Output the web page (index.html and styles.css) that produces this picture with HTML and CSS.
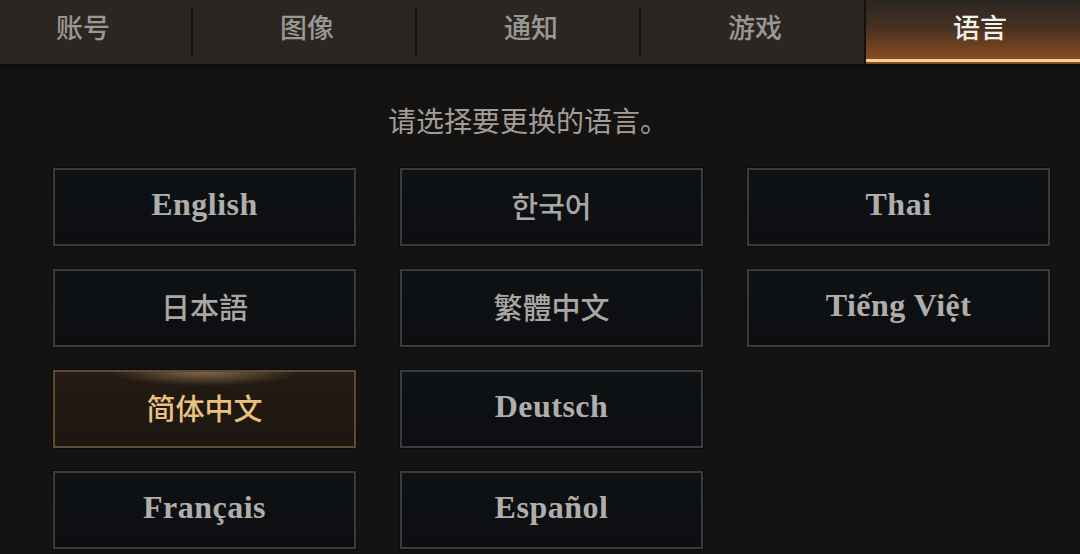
FILE: index.html
```html
<!DOCTYPE html>
<html lang="zh-CN">
<head>
<meta charset="utf-8">
<title>语言</title>
<link rel="stylesheet" href="styles.css">
</head>
<body>
<div class="page">
  <nav class="tabs">
    <div class="tab">账号</div>
    <div class="tab">图像</div>
    <div class="tab">通知</div>
    <div class="tab">游戏</div>
    <div class="tab active">语言</div>
  </nav>
  <main class="content">
    <p class="prompt">请选择要更换的语言。</p>
    <div class="grid">
      <div class="lang latin">English</div>
      <div class="lang">한국어</div>
      <div class="lang latin">Thai</div>
      <div class="lang">日本語</div>
      <div class="lang">繁體中文</div>
      <div class="lang latin">Tiếng Việt</div>
      <div class="lang selected">简体中文</div>
      <div class="lang latin">Deutsch</div>
      <div class="lang empty"></div>
      <div class="lang latin">Français</div>
      <div class="lang latin">Español</div>
    </div>
  </main>
</div>
</body>
</html>
```

FILE: styles.css
```css
* { box-sizing: border-box; }
html, body {
  margin: 0;
  padding: 0;
  background: #151312;
}
.page {
  width: 1080px;
  height: 554px;
  overflow: hidden;
  background: #151312;
  font-family: "Noto Sans CJK SC", "Noto Sans", sans-serif;
}
.tabs {
  display: flex;
  height: 64px;
  margin-left: -29px;
  background: #2a2723;
  box-shadow: 0 2px 3px rgba(0,0,0,0.5);
  position: relative;
}
.tab {
  flex: 0 0 224px;
  height: 64px;
  display: flex;
  align-items: center;
  justify-content: center;
  padding-bottom: 12px;
  font-size: 27px;
  font-weight: 500;
  color: #9b9792;
  position: relative;
}
.tab::after {
  content: "";
  position: absolute;
  right: 2px;
  top: 7px;
  height: 48px;
  width: 2px;
  background: #141210;
}
.tab:nth-child(4)::after,
.tab.active::after { display: none; }
.tab.active {
  flex-basis: 227px;
  margin-left: -3px;
  padding-left: 3px;
  color: #f3efe9;
  background: linear-gradient(to bottom, rgba(42,39,35,0) 0%, rgba(95,58,32,0.55) 45%, #8a4c1f 92%);
  border-left: 2px solid #141210;
}
.tab.active::before {
  content: "";
  position: absolute;
  left: 0;
  right: 0;
  bottom: 2px;
  height: 3px;
  background: #f6cfa3;
}
.content {
  display: flex;
  flex-direction: column;
  align-items: flex-start;
}
.prompt {
  margin: 38px 0 0 388px;
  font-size: 28px;
  line-height: 36px;
  color: #a19d98;
}
.grid {
  margin: 30px 0 0 53px;
  display: grid;
  grid-template-columns: repeat(3, 303px);
  grid-auto-rows: 78px;
  column-gap: 44px;
  row-gap: 23px;
}
.lang {
  display: flex;
  align-items: center;
  justify-content: center;
  border: 2px solid #3a3b3c;
  background: linear-gradient(to bottom, #0f1215 0%, #0c0e11 100%);
  box-shadow: 0 0 0 1px #0c0b0a;
  color: #a9a7a4;
  font-size: 29px;
  font-weight: 500;
  padding-bottom: 5px;
}
.lang.latin {
  font-family: "Liberation Serif", "DejaVu Serif", serif;
  font-weight: 700;
  font-size: 32px;
  letter-spacing: 0.5px;
  color: #b0aeab;
}
.lang.empty {
  visibility: hidden;
}
.lang.selected {
  border-color: #5f4b33;
  color: #e8c27e;
  background:
    radial-gradient(ellipse 32% 14px at 50% 0%, rgba(215,180,125,0.5), rgba(215,180,125,0) 100%),
    linear-gradient(to bottom, #241a13 0%, #1d1611 100%);
}
```
